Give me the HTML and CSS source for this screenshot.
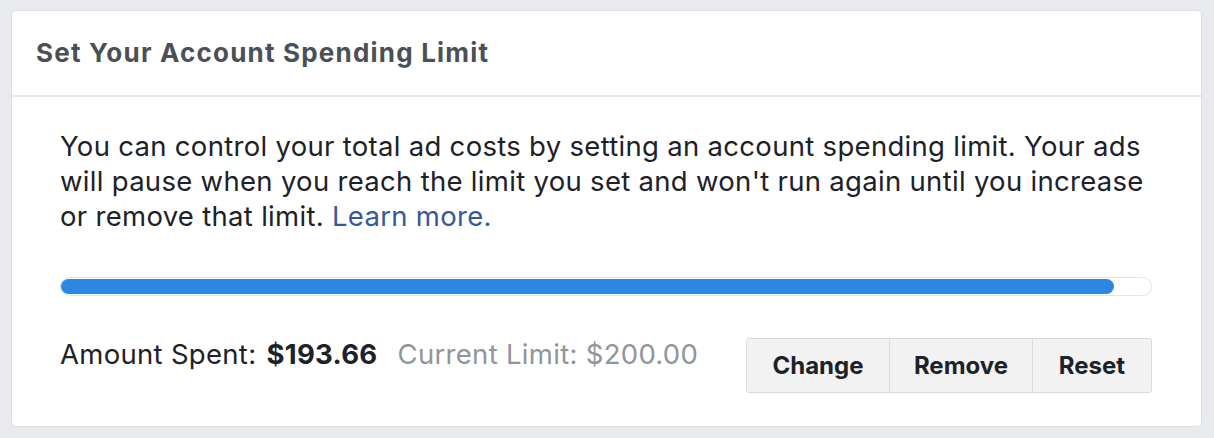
FILE: index.html
```html
<!DOCTYPE html>
<html>
<head>
<meta charset="utf-8">
<link rel="stylesheet" href="styles.css">
</head>
<body>
<div class="card">
  <div class="card-header">Set Your Account Spending Limit</div>
  <div class="card-body">
    <p class="desc">You can control your total ad costs by setting an account spending limit. Your ads will pause when you reach the limit you set and won't run again until you increase or remove that limit. <a href="#" class="link">Learn more.</a></p>
    <div class="progress"><div class="progress-fill" style="width: 96.6%"></div></div>
    <div class="footer">
      <div class="amounts">
        <span class="spent-label">Amount Spent:</span>
        <span class="spent-value">$193.66</span>
        <span class="limit">Current Limit: $200.00</span>
      </div>
      <div class="btn-group">
        <button class="btn btn-change">Change</button>
        <button class="btn btn-remove">Remove</button>
        <button class="btn btn-reset">Reset</button>
      </div>
    </div>
  </div>
</div>
</body>
</html>
```
FILE: styles.css
```css
html, body {
  margin: 0;
  padding: 0;
  background: #e9eaed;
}
body {
  padding: 10px 0 0 11px;
  font-family: Inter, "Liberation Sans", Arial, sans-serif;
  color: #1d2129;
}
.card {
  width: 1191px;
  height: 417px;
  box-sizing: border-box;
  background: #fff;
  border: 1px solid #dddfe2;
  border-radius: 5px;
}
.card-header {
  height: 86px;
  box-sizing: border-box;
  border-bottom: 2px solid #e5e6e9;
  padding: 26px 0 0 24px;
  font-size: 26px;
  line-height: 32px;
  letter-spacing: 1.2px;
  font-weight: bold;
  color: #4b4f56;
}
.card-body {
  padding: 0 49px 0 48px;
}
.desc {
  margin: 32px 0 0 0;
  font-size: 27.5px;
  line-height: 35px;
  letter-spacing: 0.3px;
  color: #1d2129;
}
.link {
  color: #365899;
  text-decoration: none;
}
.progress {
  margin-top: 43px;
  height: 19px;
  box-sizing: border-box;
  border: 1px solid #e3e4e6;
  border-radius: 10px;
  padding: 1px 0;
  background: #fff;
}
.progress-fill {
  height: 100%;
  background: #2a88e3;
  border-radius: 8px;
}
.footer {
  margin-top: 42px;
  display: flex;
  justify-content: space-between;
  align-items: flex-start;
}
.amounts {
  font-size: 27.5px;
  line-height: 32px;
  letter-spacing: 0.3px;
}
.spent-value {
  font-weight: bold;
  margin-left: 2px;
}
.limit {
  color: #90949c;
  margin-left: 12px;
}
.btn-group {
  display: flex;
  border: 1px solid #d9dadc;
  border-radius: 3px;
  overflow: hidden;
}
.btn {
  height: 53px;
  border: none;
  background: #f2f2f2;
  font-family: Inter, "Liberation Sans", Arial, sans-serif;
  font-size: 24px;
  font-weight: bold;
  color: #1d2129;
  padding: 0;
}
.btn + .btn {
  border-left: 1px solid #d9dadc;
}
.btn-change { width: 142px; }
.btn-remove { width: 143px; }
.btn-reset { width: 119px; }
```
